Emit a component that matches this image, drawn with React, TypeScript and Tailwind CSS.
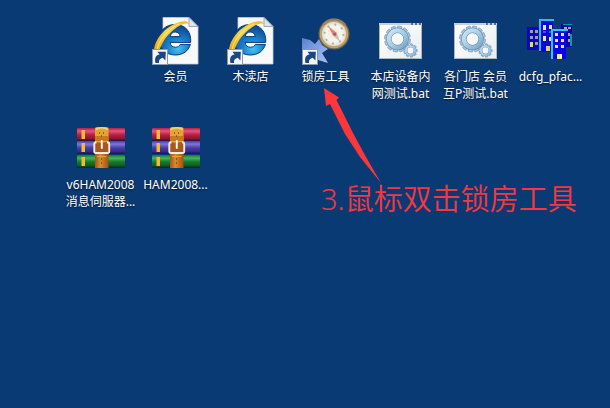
import { ReactNode, useId } from "react";

type Shortcut = {
  id: string;
  lines: string[];
  icon: ReactNode;
  className?: string;
};

function ShortcutBadge() {
  return (
    <g>
      <rect x="0.5" y="32.5" width="15" height="15" fill="#f4f6f9" stroke="#8d99aa" />
      <path d="M3.5 46 C2.2 41 4 38 7.6 37.6 L5.4 34.8 L13.8 34.8 L13.4 43.4 L10.8 40.8 C8 41.4 6.6 43 7 46 Z" fill="#1c4686" />
    </g>
  );
}

function ExplorerIcon() {
  const id = useId();
  return (
    <svg viewBox="0 0 48 48" className="size-12" aria-hidden="true">
      <defs>
        <radialGradient id={`${id}e`} cx="0.6" cy="0.8" r="0.8">
          <stop offset="0" stopColor="#45c4f2" />
          <stop offset="0.4" stopColor="#1a82cf" />
          <stop offset="1" stopColor="#0b3f86" />
        </radialGradient>
        <linearGradient id={`${id}s`} x1="0" y1="1" x2="1" y2="0">
          <stop offset="0" stopColor="#e9a311" />
          <stop offset="0.5" stopColor="#f9d648" />
          <stop offset="1" stopColor="#f0b62a" />
        </linearGradient>
      </defs>
      <path d="M11 0.5 H37 L46 9.5 V47 H11 Z" fill="#f8f9fb" stroke="#c5ccd6" strokeWidth="0.8" />
      <path d="M37 0.5 L46 9.5 H37 Z" fill="#dfe4eb" stroke="#8794a6" strokeWidth="0.8" />
      <path
        fillRule="evenodd"
        d="M23 7.5 C13.5 7.5 7 14 7 22.5 C7 31.3 13.8 38 23.2 38 C31 38 36.5 34 38.4 27.4 H28.2 C27.4 29.4 25.8 30.2 23.5 30.2 C20.2 30.2 18.3 28.4 18.2 25.4 H38.7 C39.5 14.5 33 7.5 23 7.5 Z M18.3 19.6 C18.8 16.6 20.5 15 23.2 15 C25.9 15 27.8 16.6 28.2 19.6 Z"
        fill={`url(#${id}e)`}
        stroke="#0a3c7c"
        strokeWidth="1"
      />
      <path d="M9 19 C12 12 18 8.8 25 9 C19 12 13 17 9.5 24 C8.6 22 8.6 20.5 9 19 Z" fill="#9bdcf6" opacity="0.5" />
      <path
        d="M2 35 C1.5 21 18 5 32 4.2 C34.6 4 36.6 4.8 37.6 7.6 C34 5 28 7.8 22 12.6 C14.5 18.6 9.5 26 7 35 Z"
        fill={`url(#${id}s)`}
      />
      <path d="M5 33 C6.5 23 16.5 11.5 27.5 6.8" fill="none" stroke="#fff1a3" strokeWidth="0.8" />
      <ShortcutBadge />
    </svg>
  );
}

function CompassIcon() {
  const id = useId();
  return (
    <svg viewBox="0 0 48 48" className="size-12" aria-hidden="true">
      <defs>
        <radialGradient id={`${id}c`}>
          <stop offset="0" stopColor="#f3e0d8" />
          <stop offset="0.65" stopColor="#f7f6ef" />
          <stop offset="1" stopColor="#e2ddd0" />
        </radialGradient>
        <linearGradient id={`${id}b`} x1="0" y1="0" x2="1" y2="1">
          <stop offset="0" stopColor="#5a80d0" />
          <stop offset="1" stopColor="#a9c4f5" />
        </linearGradient>
      </defs>
      <path d="M0 21 L8 23 L13 27 L17 22 L20 28 L26 32 L20 36 L26 46 L16 43 L8 46 L0 38 Z" fill={`url(#${id}b)`} />
      <circle cx="32" cy="17" r="15.5" fill="#6f664f" />
      <circle cx="32" cy="17" r="14.3" fill="#c6a26b" />
      <path d="M21 8 A14 14 0 0 1 43 8" fill="none" stroke="#8f8264" strokeWidth="2.4" />
      <circle cx="32" cy="17" r="12" fill={`url(#${id}c)`} />
      <circle cx="32" cy="17" r="9.5" fill="none" stroke="#b5b2a6" strokeWidth="2" strokeDasharray="2 5.46" />
      <path d="M26 9 L35 16 L31 18.6 Z" fill="#d98777" />
      <path d="M38 24.5 L34.5 15.5 L31 18.8 Z" fill="#c3bdb6" />
      <circle cx="32.8" cy="17.2" r="1.5" fill="#9a5f55" />
      <ShortcutBadge />
    </svg>
  );
}

function Gear({ cx, cy, r, teeth, fill }: { cx: number; cy: number; r: number; teeth: number; fill: string }) {
  const tooth = r * 0.36;
  return (
    <g transform={`translate(${cx} ${cy})`}>
      {Array.from({ length: teeth }, (_, i) => (
        <rect
          key={i}
          x={-tooth / 2}
          y={-r}
          width={tooth}
          height={r * 0.4}
          rx={r * 0.06}
          fill="#a4c5dd"
          stroke="#6387a4"
          strokeWidth="0.5"
          transform={`rotate(${(i * 360) / teeth + 10})`}
        />
      ))}
      <circle r={r * 0.66} fill="none" stroke="#6387a4" strokeWidth={r * 0.4} />
      <circle r={r * 0.66} fill="none" stroke={fill} strokeWidth={r * 0.33} />
    </g>
  );
}

function BatchIcon() {
  const id = useId();
  return (
    <svg viewBox="0 0 48 48" className="size-12" aria-hidden="true">
      <defs>
        <linearGradient id={`${id}g`} gradientUnits="userSpaceOnUse" x1="-10" y1="-10" x2="10" y2="10">
          <stop offset="0" stopColor="#d5e8f5" />
          <stop offset="0.5" stopColor="#a9cde6" />
          <stop offset="1" stopColor="#6ea0c6" />
        </linearGradient>
        <linearGradient id={`${id}w`} x1="0" y1="0" x2="1" y2="1">
          <stop offset="0" stopColor="#ffffff" />
          <stop offset="1" stopColor="#e9edf1" />
        </linearGradient>
      </defs>
      <rect x="2" y="6" width="43" height="36" fill="#aab6c2" />
      <rect x="3" y="8" width="41" height="33" fill={`url(#${id}w)`} />
      <rect x="2" y="6" width="43" height="2" fill="#c3d1de" />
      <path d="M34 7 H36 M38 7 H40 M42 7 H44" stroke="#34516f" strokeWidth="1.4" />
      <Gear cx={20.5} cy={22} r={13} teeth={12} fill={`url(#${id}g)`} />
      <circle cx="33.5" cy="33.5" r="5" fill="#f4f7fa" />
      <Gear cx={33.5} cy={33.5} r={6.8} teeth={9} fill={`url(#${id}g)`} />
    </svg>
  );
}

function BuildingsIcon() {
  return (
    <svg viewBox="0 0 48 48" className="size-12" shapeRendering="crispEdges" aria-hidden="true">
      <path d="M34 7 H45 V30 H34 Z" fill="#0505a8" />
      <path d="M36 7 H45" stroke="#1590a8" strokeWidth="1" />
      <path d="M37 10h3v2h-3z M41 10h3v2h-3z M41 16h2v3h-2z M41 22h2v3h-2z" fill="#a3a98c" />
      <path d="M44 17 V29" stroke="#12969c" strokeWidth="2" />
      <path d="M0 10 H13 V33 H0 Z" fill="#0707c4" />
      <path d="M3 13h3v3h-3z M8 13h3v3h-3z M3 19h3v3h-3z M8 19h3v3h-3z M8 25h3v3h-3z" fill="#a09f98" />
      <path d="M3 25h3v5h-3z" fill="#e6df45" />
      <path d="M12 3 H26 V35 H12 Z" fill="#0a08df" />
      <path d="M13 34 V3 H27" fill="none" stroke="#35b5fa" strokeWidth="2" />
      <path d="M16 8h3v5h-3z M22 8h3v4h-3z M16 19h3v5h-3z M22 20h2v4h-2z" fill="#f0e0a0" />
      <path d="M16 14h3v2h-3z M22 14h2v2h-2z" fill="#5754b0" />
      <path d="M19 29h4v5h-4z" fill="#dfcf6f" />
      <path d="M24 12 H39 V42 H24 Z" fill="#0704ea" />
      <path d="M25 42 V13 H41" fill="none" stroke="#2fc5ff" strokeWidth="2" />
      <path d="M28 16h3v3h-3z M34 16h3v3h-3z M28 22h3v3h-3z M34 22h3v3h-3z M28 28h3v3h-3z M34 28h3v3h-3z" fill="#f4e486" />
      <path d="M30 37h5v5h-5z" fill="#f4ee58" />
      <path d="M33 37h2v4h-2z" fill="#ffffff" />
    </svg>
  );
}

function ArchiveIcon() {
  const id = useId();
  const books = [
    { y: 3, light: "#e2577b", main: "#b81e43", dark: "#7c0f2c" },
    { y: 16, light: "#7f76da", main: "#493da6", dark: "#2b2372" },
    { y: 30, light: "#45b455", main: "#147a2d", dark: "#084d1a" },
  ];
  return (
    <svg viewBox="0 0 48 48" className="size-12" aria-hidden="true">
      <defs>
        {books.map((book, i) => (
          <linearGradient key={i} id={`${id}${i}`} x1="0" y1="0" x2="0" y2="1">
            <stop offset="0" stopColor={book.main} />
            <stop offset="0.25" stopColor={book.light} />
            <stop offset="0.55" stopColor={book.main} />
            <stop offset="1" stopColor={book.dark} />
          </linearGradient>
        ))}
        <linearGradient id={`${id}strap`} x1="0" y1="0" x2="1" y2="0">
          <stop offset="0" stopColor="#a65310" />
          <stop offset="0.4" stopColor="#d98a30" />
          <stop offset="1" stopColor="#a34f10" />
        </linearGradient>
      </defs>
      {books.map((book, i) => (
        <g key={i}>
          <rect x="0" y={book.y} width="48" height="12.5" rx="1" fill={`url(#${id}${i})`} />
          <rect x="0" y={book.y + 11.5} width="48" height="1.5" fill="#161a2c" opacity="0.6" />
          <rect x="4.5" y={book.y + 2} width="3.5" height="9" fill="#f4ba35" />
        </g>
      ))}
      <rect x="18" y="16" width="13.5" height="27" fill={`url(#${id}strap)`} />
      <path d="M18 4 Q18 2 20 2 H29.5 Q31.5 2 31.5 4 V17 H18 Z" fill="#e4a52f" />
      <path d="M18 11 H31.5 V16 H18 Z" fill="#c9781d" />
      <path d="M18.5 4.5 Q24.7 1.2 31 4.5" fill="none" stroke="#f8d477" strokeWidth="1.5" />
      <path d="M22 8h1 M26 8h1 M24 11h1 M24 34h1 M24 38h1" stroke="#8a4209" strokeWidth="1.3" />
      <rect x="19" y="18" width="11.5" height="9.5" fill="#a9581c" />
      <path d="M19.5 17.5 H18.5 Q17.3 17.5 17.3 19 V26.5 Q17.3 28 19 28 H30.5 Q32.2 28 32.2 26.5 V19 Q32.2 17.5 31 17.5 H30" fill="none" stroke="#f0ece4" strokeWidth="1.9" />
      <path d="M24.8 16 V23" stroke="#f7f5ef" strokeWidth="2" strokeLinecap="round" />
      <path d="M20 31.5 H29.5" stroke="#e4a23f" strokeWidth="1" />
    </svg>
  );
}

const shortcuts: Shortcut[] = [
  { id: "member", lines: ["会员"], icon: <ExplorerIcon />, className: "col-start-2" },
  { id: "mudu", lines: ["木渎店"], icon: <ExplorerIcon /> },
  { id: "lock", lines: ["锁房工具"], icon: <CompassIcon /> },
  { id: "lan", lines: ["本店设备内", "网测试.bat"], icon: <BatchIcon /> },
  { id: "stores", lines: ["各门店 会员", "互P测试.bat"], icon: <BatchIcon /> },
  { id: "dcfg", lines: ["dcfg_pfac..."], icon: <BuildingsIcon /> },
  { id: "v6ham", lines: ["v6HAM2008", "消息伺服器..."], icon: <ArchiveIcon /> },
  { id: "ham", lines: ["HAM2008..."], icon: <ArchiveIcon /> },
];

function DesktopIcon({ lines, icon, className }: Omit<Shortcut, "id">) {
  return (
    <button type="button" className={`flex flex-col items-center gap-[3px] ${className ?? ""}`}>
      {icon}
      <span className="text-center text-[12px] leading-[17px] whitespace-nowrap text-white [text-shadow:0_1px_2px_rgb(0_0_0/0.7)]">
        {lines.map((line) => (
          <span key={line} className="block">{line}</span>
        ))}
      </span>
    </button>
  );
}

export default function App() {
  return (
    <main className="relative min-h-screen overflow-hidden bg-[#0a3a74] pt-[17px] pl-[63px] font-['Noto_Sans','Noto_Sans_CJK_SC',sans-serif]">
      <div className="grid auto-rows-[108px] grid-cols-[repeat(7,75px)]">
        {shortcuts.map(({ id, ...item }) => (
          <DesktopIcon key={id} {...item} />
        ))}
      </div>

      {/* callout over the desktop */}
      <div className="pointer-events-none absolute top-[88px] left-[321px] text-[#f8373f]">
        <svg viewBox="0 0 60 96" className="h-24 w-[60px]" aria-hidden="true">
          <path d="M3 0 L18 9.5 L15.5 12 L32 45 L45 69 L60 95 L39 69 L24 46 L9 16 L5 18 Z" fill="#ff373b" />
        </svg>
        <p className="text-[29px] leading-[30px] font-[350] whitespace-nowrap">3.鼠标双击锁房工具</p>
      </div>
    </main>
  );
}
